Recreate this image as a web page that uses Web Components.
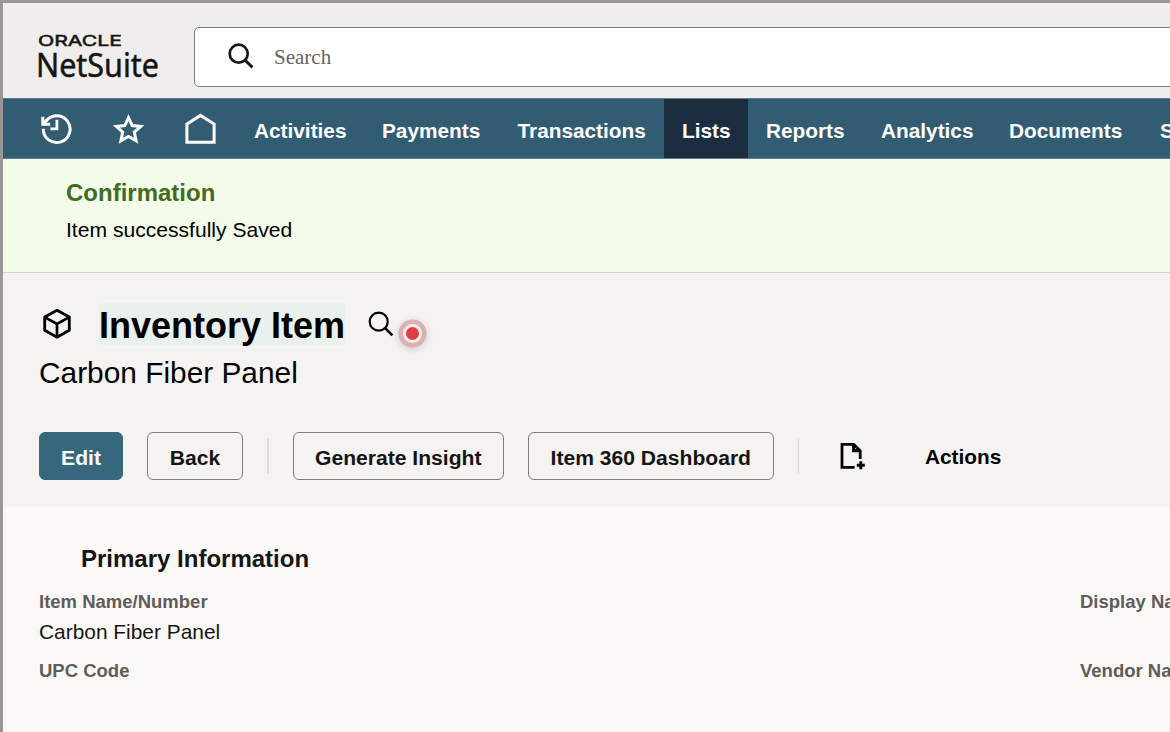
<!DOCTYPE html>
<html lang="en">
<head>
<meta charset="utf-8">
<title>Inventory Item - NetSuite</title>
<style>
  body {
    margin: 0;
    height: 732px;
    overflow: hidden;
    font-family: "Liberation Sans", Arial, sans-serif;
    color: #000;
  }
</style>
</head>
<body>
<ns-page>
  <ns-header slot="header" placeholder="Search"></ns-header>

  <ns-nav slot="nav">
    <ns-tab style="width:128px">Activities</ns-tab>
    <ns-tab style="width:135.5px">Payments</ns-tab>
    <ns-tab style="width:164.5px">Transactions</ns-tab>
    <ns-tab style="width:84px" active>Lists</ns-tab>
    <ns-tab style="width:115px">Reports</ns-tab>
    <ns-tab style="width:128px">Analytics</ns-tab>
    <ns-tab style="width:151px">Documents</ns-tab>
    <ns-tab>Setup</ns-tab>
  </ns-nav>

  <ns-alert slot="alert" heading="Confirmation">Item successfully Saved</ns-alert>

  <ns-record slot="record" type="Inventory Item" name="Carbon Fiber Panel">
    <ns-button primary style="width:84px">Edit</ns-button>
    <ns-button style="width:96px">Back</ns-button>
    <ns-divider></ns-divider>
    <ns-button style="width:211.5px">Generate Insight</ns-button>
    <ns-button style="width:245.5px">Item 360 Dashboard</ns-button>
    <ns-divider></ns-divider>
    <ns-icon name="newfile" size="28" style="margin-left:14.5px"></ns-icon>
    <ns-menu>Actions</ns-menu>
  </ns-record>

  <ns-fieldgroup heading="Primary Information">
    <ns-field label="Item Name/Number">Carbon Fiber Panel</ns-field>
    <ns-field label="Display Name/Code"></ns-field>
    <ns-field label="UPC Code"></ns-field>
    <ns-field label="Vendor Name/Code"></ns-field>
  </ns-fieldgroup>
</ns-page>

<script>
(function () {
  /* =========================
     ICONS
  ========================= */
  const ICONS = {
    search: `<svg viewBox="0 0 28 28"><circle cx="11.7" cy="11.7" r="9" stroke-width="2.7"/><path d="M18.2 18.2L25.4 25.4" stroke-width="2.9"/></svg>`,
    find: `<svg viewBox="0 0 28 28"><circle cx="11.7" cy="11.7" r="9" stroke-width="2.2"/><path d="M18.2 18.2L25.4 25.4" stroke-width="2.6"/></svg>`,
    history: `<svg viewBox="0 0 32 32"><path d="M3.3 15.8A13.4 13.4 0 1 0 5.6 8.6" stroke-width="3"/><path d="M2.8 3.8V11.2H10.2" stroke-width="3"/><path d="M3 11L6.8 7.2" stroke-width="3"/><path d="M16.9 6.8V15.8H10.4" stroke-width="2.8"/></svg>`,
    star: `<svg viewBox="0 0 32 32"><path d="M16.5 4.6L20.2 12.6L28.6 13.5L22.3 19.1L24.1 27.8L16.500 23.500L8.9 27.8L10.7 19.1L4.4 13.5L12.8 12.6Z" stroke-width="3"/></svg>`,
    home: `<svg viewBox="0 0 32 32"><path d="M2.9 29.3V11.1L16.5 2.4L30.1 11.1V29.3Z" stroke-width="3"/></svg>`,
    cube: `<svg viewBox="0 0 30 30"><path d="M15 1.3L27.3 8.1V21.3L15 28.2L2.7 21.3V8.1Z" stroke-width="2.8" stroke-linejoin="round"/><path d="M2.7 8.1L15 15L27.3 8.1M15 15V28.2" stroke-width="2.7"/></svg>`,
    newfile: `<svg viewBox="0 0 28 28"><path d="M16.6 25.4H4V2.4H15.8L22.2 8.8V17" stroke-width="2.8"/><path d="M15.6 2.400V8.8H22.2" stroke-width="3"/><path d="M18.8 23.2H26.8M22.8 19.2V27.2" stroke-width="2.9"/></svg>`,
  };

  class NsIcon extends HTMLElement {
    constructor() {
      super();
      this.attachShadow({ mode: "open" });
    }

    connectedCallback() {
      const size = this.getAttribute("size") || "32";
      this.shadowRoot.innerHTML = `
      <style>
      :host{
        display:block;
        flex:none;
        width:${size}px;
        height:${size}px;
      }
      svg{
        display:block;
        width:100%;
        height:100%;
        fill:none;
        stroke:currentColor;
      }
      </style>
      ${ICONS[this.getAttribute("name")] || ""}
      `;
    }
  }

  /* =========================
     PAGE FRAME
  ========================= */
  class NsPage extends HTMLElement {
    constructor() {
      super();
      this.attachShadow({ mode: "open" });
      this.shadowRoot.innerHTML = `
      <style>
      :host{
        display:flex;
        flex-direction:column;
        box-sizing:border-box;
        height:732px;
        border-left:3px solid #999897;
        border-top:3px solid #999897;
        background:#FAF9F7;
        overflow:hidden;
      }
      </style>
      <slot name="header"></slot>
      <slot name="nav"></slot>
      <slot name="alert"></slot>
      <slot name="record"></slot>
      <slot></slot>
      `;
    }
  }

  /* =========================
     HEADER
  ========================= */
  class NsHeader extends HTMLElement {
    constructor() {
      super();
      this.attachShadow({ mode: "open" });
    }

    connectedCallback() {
      this.shadowRoot.innerHTML = `
      <style>
      :host{
        display:flex;
        flex:none;
        box-sizing:border-box;
        height:95px;
        padding:24px 0 0 35px;
        background:#EFEEEC;
      }
      .logo{
        flex:none;
        width:156px;
        height:60px;
        margin-top:-1px;
        overflow:visible;
        fill:#161513;
        stroke:#161513;
      }
      .search{
        flex:1;
        display:flex;
        align-items:center;
        gap:19px;
        box-sizing:border-box;
        height:60px;
        padding-left:32px;
        margin-right:-8px;
        border:1px solid #807E7C;
        border-radius:5px;
        background:#FFFFFF;
        color:#161513;
      }
      .search ns-icon{
        margin-bottom:2px;
      }
      .placeholder{
        font:21px "Liberation Serif", serif;
        color:#66625F;
      }
      </style>
      <svg class="logo" viewBox="0 0 156 60">
        <text x="0" y="20.200" font-family="Inter, sans-serif" font-size="14.500" stroke-width=".5" textLength="84" lengthAdjust="spacingAndGlyphs">ORACLE</text>
        <text x="-2" y="51" font-family="Noto Sans, sans-serif" font-size="33" stroke-width=".5" textLength="123" lengthAdjust="spacingAndGlyphs">NetSuite</text>
      </svg>
      <div class="search">
        <ns-icon name="search" size="28"></ns-icon>
        <span class="placeholder">${this.getAttribute("placeholder")}</span>
      </div>
      `;
    }
  }

  /* =========================
     NAVIGATION
  ========================= */
  class NsNav extends HTMLElement {
    constructor() {
      super();
      this.attachShadow({ mode: "open" });
      this.shadowRoot.innerHTML = `
      <style>
      :host{
        display:flex;
        flex:none;
        box-sizing:border-box;
        height:61px;
        border-top:1px solid #5D7C8D;
        border-bottom:1px solid #5D7C8D;
        background:#325C72;
        color:#FFFFFF;
        overflow:hidden;
      }
      .shortcuts{
        flex:none;
        display:flex;
        align-items:center;
        gap:40px;
        width:233px;
        box-sizing:border-box;
        padding-left:37px;
      }
      </style>
      <div class="shortcuts">
        <ns-icon name="history"></ns-icon>
        <ns-icon name="star"></ns-icon>
        <ns-icon name="home"></ns-icon>
      </div>
      <slot></slot>
      `;
    }
  }

  class NsTab extends HTMLElement {
    constructor() {
      super();
      this.attachShadow({ mode: "open" });
      this.shadowRoot.innerHTML = `
      <style>
      :host{
        flex:none;
        box-sizing:border-box;
        padding:0 0 0 18px;
        font-size:20.8px;
        font-weight:700;
        line-height:63px;
        white-space:nowrap;
      }
      :host([active]){
        background:#1B2D3F;
      }
      </style>
      <slot></slot>
      `;
    }
  }

  /* =========================
     ALERT
  ========================= */
  class NsAlert extends HTMLElement {
    constructor() {
      super();
      this.attachShadow({ mode: "open" });
    }

    connectedCallback() {
      this.shadowRoot.innerHTML = `
      <style>
      :host{
        display:block;
        flex:none;
        box-sizing:border-box;
        height:114px;
        padding:17px 63px 0;
        border-bottom:1px solid #D3D2D0;
        background:#F3FCEB;
      }
      .heading{
        font-size:24px;
        font-weight:700;
        line-height:34px;
        color:#436B1D;
      }
      .text{
        font-size:21.1px;
        line-height:40px;
      }
      </style>
      <div class="heading">${this.getAttribute("heading")}</div>
      <div class="text"><slot></slot></div>
      `;
    }
  }

  /* =========================
     RECORD HEADER
  ========================= */
  class NsRecord extends HTMLElement {
    constructor() {
      super();
      this.attachShadow({ mode: "open" });
    }

    connectedCallback() {
      this.shadowRoot.innerHTML = `
      <style>
      :host{
        display:block;
        flex:none;
        box-sizing:border-box;
        height:234px;
        padding:30px 36px 0;
        background:#F4F3F1;
      }
      .title{
        display:flex;
        align-items:center;
        height:42px;
        padding-left:3px;
      }
      .type{
        width:246px;
        margin-left:27px;
        font-size:36px;
        font-weight:700;
        line-height:45px;
        height:42px;
        white-space:nowrap;
        background:#EAF1EC;
      }
      .find{
        position:relative;
        margin-left:22px;
      }
      .cursor{
        position:absolute;
        left:35.5px;
        top:13.5px;
        width:13px;
        height:13px;
        border:3px solid #FBEDE9;
        border-radius:50%;
        background:#DE3E40;
        box-shadow:0 0 0 4.5px #DFB0B3, 0 2px 9px 4px rgba(0,0,0,.16);
      }
      .name{
        font-size:29.85px;
        line-height:56px;
      }
      .actions{
        display:flex;
        align-items:center;
        gap:24px;
        height:48px;
        margin-top:31px;
      }
      </style>
      <div class="title">
        <ns-icon name="cube" size="30"></ns-icon>
        <span class="type">${this.getAttribute("type")}</span>
        <div class="find">
          <ns-icon name="find" size="28"></ns-icon>
          <span class="cursor"></span>
        </div>
      </div>
      <div class="name">${this.getAttribute("name")}</div>
      <div class="actions"><slot></slot></div>
      `;
    }
  }

  class NsButton extends HTMLElement {
    constructor() {
      super();
      this.attachShadow({ mode: "open" });
      this.shadowRoot.innerHTML = `
      <style>
      :host{
        display:block;
        flex:none;
        box-sizing:border-box;
        height:48px;
        border:1px solid #7F7D7B;
        border-radius:6px;
        font-size:21.1px;
        font-weight:700;
        line-height:49px;
        text-align:center;
        white-space:nowrap;
        color:#161513;
      }
      :host([primary]){
        border-color:#36677D;
        background:#36677D;
        color:#FFFFFF;
      }
      </style>
      <slot></slot>
      `;
    }
  }

  class NsDivider extends HTMLElement {
    constructor() {
      super();
      this.attachShadow({ mode: "open" });
      this.shadowRoot.innerHTML = `
      <style>
      :host{
        display:block;
        flex:none;
        width:1.5px;
        height:36px;
        background:#DCDBD9;
      }
      </style>
      `;
    }
  }

  class NsMenu extends HTMLElement {
    constructor() {
      super();
      this.attachShadow({ mode: "open" });
      this.shadowRoot.innerHTML = `
      <style>
      :host{
        display:block;
        margin-left:35.5px;
        font-size:20.8px;
        font-weight:700;
        line-height:48px;
        padding-top:2px;
      }
      </style>
      <slot></slot>
      `;
    }
  }

  /* =========================
     FIELDS
  ========================= */
  class NsFieldgroup extends HTMLElement {
    constructor() {
      super();
      this.attachShadow({ mode: "open" });
    }

    connectedCallback() {
      this.shadowRoot.innerHTML = `
      <style>
      :host{
        display:block;
        flex:1;
        padding:32px 0 0 36px;
        background:#FAF9F7;
        color:#161513;
      }
      .heading{
        padding-left:42px;
        font-size:24px;
        font-weight:700;
        line-height:40px;
      }
      .fields{
        display:grid;
        grid-template-columns:1041px 300px;
        grid-auto-rows:69px;
        padding-top:8px;
      }
      </style>
      <div class="heading">${this.getAttribute("heading")}</div>
      <div class="fields"><slot></slot></div>
      `;
    }
  }

  class NsField extends HTMLElement {
    constructor() {
      super();
      this.attachShadow({ mode: "open" });
    }

    connectedCallback() {
      this.shadowRoot.innerHTML = `
      <style>
      :host{
        display:block;
        font-size:20.9px;
        line-height:30px;
        white-space:nowrap;
      }
      .label{
        font-size:18.5px;
        font-weight:700;
        color:#5F5C5A;
      }
      </style>
      <div class="label">${this.getAttribute("label")}</div>
      <div><slot></slot></div>
      `;
    }
  }

  customElements.define("ns-icon", NsIcon);
  customElements.define("ns-page", NsPage);
  customElements.define("ns-header", NsHeader);
  customElements.define("ns-nav", NsNav);
  customElements.define("ns-tab", NsTab);
  customElements.define("ns-alert", NsAlert);
  customElements.define("ns-record", NsRecord);
  customElements.define("ns-button", NsButton);
  customElements.define("ns-divider", NsDivider);
  customElements.define("ns-menu", NsMenu);
  customElements.define("ns-fieldgroup", NsFieldgroup);
  customElements.define("ns-field", NsField);
})();
</script>
</body>
</html>
